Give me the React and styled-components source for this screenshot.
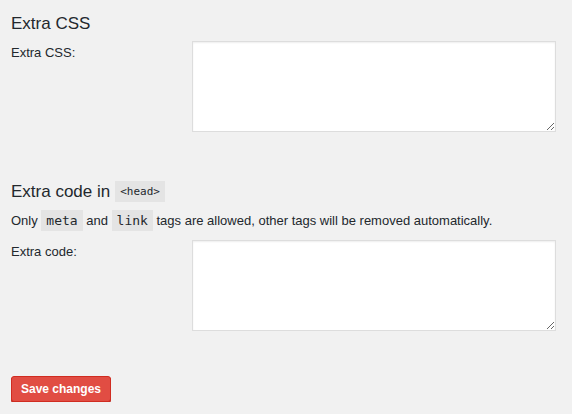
import React from "react";
import styled, { createGlobalStyle } from "styled-components";

const Global = createGlobalStyle`
  html, body {
    margin: 0;
    background: #f1f1f1;
  }
  body {
    font-family: "Liberation Sans", "Open Sans", sans-serif;
    font-size: 13px;
    color: #23282d;
  }
`;

const Page = styled("div")`
  padding: 0 11px;
`;

const Heading = styled("h2")`
  margin: 0;
  font-size: 17px;
  font-weight: 400;
  line-height: 20px;
  color: #23282d;
  display: flex;
  align-items: center;
  gap: 5px;
  padding-top: ${(p) => p.top}px;
`;

const Code = styled("code")`
  font-family: "DejaVu Sans Mono", "Liberation Mono", monospace;
  font-size: ${(p) => (p.small ? 11 : 13)}px;
  background: #e4e4e4;
  padding: 3px 5px;
  line-height: 15px;
`;

const Row = styled("div")`
  display: flex;
  margin-top: ${(p) => p.top}px;
`;

const Label = styled("label")`
  width: 181px;
  flex-shrink: 0;
  padding-top: 5px;
  line-height: 14px;
`;

const Area = styled("textarea")`
  box-sizing: border-box;
  width: 364px;
  height: 91px;
  margin: 0;
  border: 1px solid #dddddd;
  box-shadow: inset 0 1px 2px rgba(0, 0, 0, 0.07);
  background: #fff;
  resize: both;
`;

const Note = styled("p")`
  margin: 0;
  margin-top: 9px;
  line-height: 20px;
`;

const Button = styled("button")`
  display: block;
  margin-top: 45px;
  height: 26px;
  padding: 0 9px;
  background: #e14d43;
  border: 1px solid #d02c21;
  border-radius: 3px;
  box-shadow: 0 1px 0 #ba281e;
  color: #fff;
  font-family: "Liberation Sans", "Open Sans", sans-serif;
  font-size: 12px;
  font-weight: 700;
  cursor: pointer;
`;

const App = () => {
  return (
    <Page>
      <Global />
      <Heading top={14}>Extra CSS</Heading>
      <Row top={7}>
        <Label>Extra CSS:</Label>
        <Area />
      </Row>
      <Heading top={49}>
        Extra code in <Code small>&lt;head&gt;</Code>
      </Heading>
      <Note>
        Only <Code>meta</Code> and <Code>link</Code> tags are allowed, other
        tags will be removed automatically.
      </Note>
      <Row top={9}>
        <Label>Extra code:</Label>
        <Area />
      </Row>
      <Button>Save changes</Button>
    </Page>
  );
};

export default App;
